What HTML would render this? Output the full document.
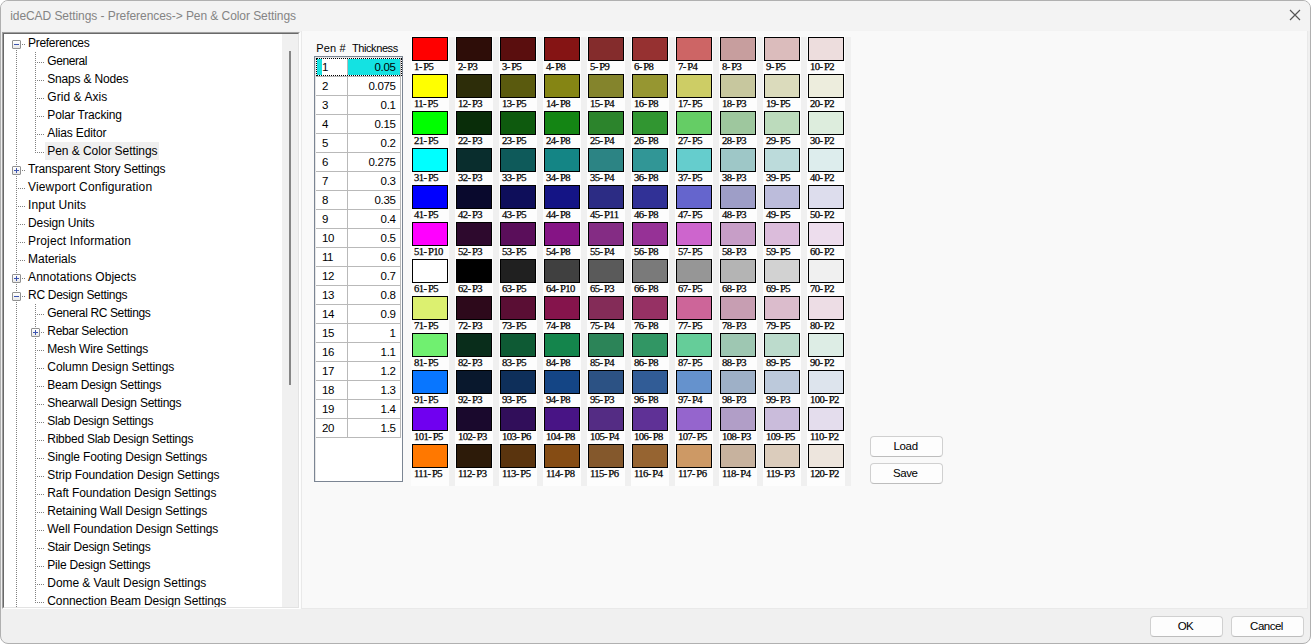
<!DOCTYPE html>
<html><head><meta charset="utf-8"><title>ideCAD Settings</title>
<style>
html,body{margin:0;padding:0;background:#fff;}
body{width:1311px;height:644px;overflow:hidden;position:relative;font-family:"Liberation Sans",sans-serif;font-size:12px;}
#win{position:absolute;left:0;top:0;width:1309px;height:642px;border:1px solid #b0b0b0;border-radius:8px;background:#f0f0f0;overflow:hidden;}
#win > *{position:absolute;}
/* coordinates inside #win are page coords minus 1 (border) -> use wrapper shift */
#titlebar{left:-1px;top:-1px;width:1311px;height:31px;background:#f3f3f3;}
#closex{left:1288px;top:8px;}
#tree{left:1px;top:31px;width:296px;height:575px;background:#fff;border:1px solid;border-color:#a0a0a0 #fff #fff #a0a0a0;box-sizing:content-box;}
#sbar{position:absolute;left:279px;top:1px;width:16px;height:573px;background:#f0f0f0;}
#thumb{position:absolute;left:286px;top:18px;width:2px;height:334px;background:#868686;}
#panel{left:300px;top:30px;width:1007px;height:578px;background:#f9f9f9;border:1px solid #e9e9e9;border-top:none;box-sizing:border-box;}
.t{position:absolute;white-space:pre;line-height:normal;margin-left:-1px;margin-top:-1px;}
.dh{position:absolute;height:1px;margin-left:-1px;margin-top:-1px;background-image:repeating-linear-gradient(90deg,#808080 0 1px,transparent 1px 2px);}
.dv{position:absolute;width:1px;margin-left:-1px;margin-top:-1px;background-image:repeating-linear-gradient(180deg,#808080 0 1px,transparent 1px 2px);}
.bx{position:absolute;width:7px;height:7px;border:1px solid #919191;border-radius:1px;background:linear-gradient(#fff,#e8e8e8);margin-left:-1px;margin-top:-1px;}
.bx .mh{position:absolute;left:1px;top:3px;width:5px;height:1px;background:#3c54b0;}
.bx .mv{position:absolute;left:3px;top:1px;width:1px;height:5px;background:#3c54b0;}
.abs{position:absolute;margin-left:-1px;margin-top:-1px;}
.btn{position:absolute;margin-left:-1px;margin-top:-1px;box-sizing:border-box;background:#fdfdfd;border:1px solid #d0d0d0;border-bottom-color:#bdbdbd;border-radius:4px;}
.sw{position:absolute;margin-left:-1px;margin-top:-1px;width:34px;height:22px;border:1px solid #000;}

#treein{position:absolute;left:0;top:0;width:296px;height:575px;border:1px solid;border-color:#696969 #e3e3e3 #e3e3e3 #696969;box-sizing:border-box;}

.lb{-webkit-text-stroke:0.25px #000;}
.lb b{font-weight:normal;margin-left:1.6px;}

</style></head>
<body>
<div id="win">
<div id="titlebar"></div>
<svg id="closex" width="12" height="12" viewBox="0 0 12 12"><path d="M1 1 L11 11 M11 1 L1 11" stroke="#555" stroke-width="1.15" fill="none"/></svg>
<div id="tree"><div id="treein"></div><div id="sbar"></div><div id="thumb"></div></div>
<div id="panel"></div>
<div class="dv" style="left:16px;top:50px;height:557px"></div>
<div class="dv" style="left:35px;top:52px;height:101px"></div>
<div class="dv" style="left:35px;top:304px;height:299px"></div>
<div class="bx" style="left:12px;top:40px"><i class="mh"></i></div>
<div class="dh" style="left:22px;top:44px;width:3px"></div>
<div class="dh" style="left:37px;top:62px;width:7px"></div>
<div class="dh" style="left:37px;top:80px;width:7px"></div>
<div class="dh" style="left:37px;top:98px;width:7px"></div>
<div class="dh" style="left:37px;top:116px;width:7px"></div>
<div class="dh" style="left:37px;top:134px;width:7px"></div>
<div class="dh" style="left:37px;top:152px;width:7px"></div>
<div class="abs" style="left:45px;top:142px;width:114px;height:18px;background:#efefef"></div>
<div class="bx" style="left:12px;top:166px"><i class="mh"></i><i class="mv"></i></div>
<div class="dh" style="left:22px;top:170px;width:3px"></div>
<div class="dh" style="left:18px;top:188px;width:7px"></div>
<div class="dh" style="left:18px;top:206px;width:7px"></div>
<div class="dh" style="left:18px;top:224px;width:7px"></div>
<div class="dh" style="left:18px;top:242px;width:7px"></div>
<div class="dh" style="left:18px;top:260px;width:7px"></div>
<div class="bx" style="left:12px;top:274px"><i class="mh"></i><i class="mv"></i></div>
<div class="dh" style="left:22px;top:278px;width:3px"></div>
<div class="bx" style="left:12px;top:292px"><i class="mh"></i></div>
<div class="dh" style="left:22px;top:296px;width:3px"></div>
<div class="dh" style="left:37px;top:314px;width:7px"></div>
<div class="bx" style="left:31px;top:328px"><i class="mh"></i><i class="mv"></i></div>
<div class="dh" style="left:41px;top:332px;width:3px"></div>
<div class="dh" style="left:37px;top:350px;width:7px"></div>
<div class="dh" style="left:37px;top:368px;width:7px"></div>
<div class="dh" style="left:37px;top:386px;width:7px"></div>
<div class="dh" style="left:37px;top:404px;width:7px"></div>
<div class="dh" style="left:37px;top:422px;width:7px"></div>
<div class="dh" style="left:37px;top:440px;width:7px"></div>
<div class="dh" style="left:37px;top:458px;width:7px"></div>
<div class="dh" style="left:37px;top:476px;width:7px"></div>
<div class="dh" style="left:37px;top:494px;width:7px"></div>
<div class="dh" style="left:37px;top:512px;width:7px"></div>
<div class="dh" style="left:37px;top:530px;width:7px"></div>
<div class="dh" style="left:37px;top:548px;width:7px"></div>
<div class="dh" style="left:37px;top:566px;width:7px"></div>
<div class="dh" style="left:37px;top:584px;width:7px"></div>
<div class="dh" style="left:37px;top:602px;width:7px"></div>
<div class="abs" style="left:314px;top:56px;width:87px;height:424px;border:1px solid #7b8593;background:#fff"></div>
<div class="abs" style="left:315px;top:57px;width:87px;height:424px;border-left:1px solid #e6e6e6;border-top:1px solid #e6e6e6;box-sizing:border-box"></div>
<div class="abs" style="left:317px;top:59px;width:5px;height:16px;background:#14e2e2"></div>
<div class="abs" style="left:348px;top:59px;width:53px;height:16px;background:#14e2e2"></div>
<div class="abs" style="left:316px;top:76px;width:85px;height:1px;background:#b9b9b9"></div>
<div class="abs" style="left:316px;top:95px;width:85px;height:1px;background:#b9b9b9"></div>
<div class="abs" style="left:316px;top:114px;width:85px;height:1px;background:#b9b9b9"></div>
<div class="abs" style="left:316px;top:133px;width:85px;height:1px;background:#b9b9b9"></div>
<div class="abs" style="left:316px;top:152px;width:85px;height:1px;background:#b9b9b9"></div>
<div class="abs" style="left:316px;top:171px;width:85px;height:1px;background:#b9b9b9"></div>
<div class="abs" style="left:316px;top:190px;width:85px;height:1px;background:#b9b9b9"></div>
<div class="abs" style="left:316px;top:209px;width:85px;height:1px;background:#b9b9b9"></div>
<div class="abs" style="left:316px;top:228px;width:85px;height:1px;background:#b9b9b9"></div>
<div class="abs" style="left:316px;top:247px;width:85px;height:1px;background:#b9b9b9"></div>
<div class="abs" style="left:316px;top:266px;width:85px;height:1px;background:#b9b9b9"></div>
<div class="abs" style="left:316px;top:285px;width:85px;height:1px;background:#b9b9b9"></div>
<div class="abs" style="left:316px;top:304px;width:85px;height:1px;background:#b9b9b9"></div>
<div class="abs" style="left:316px;top:323px;width:85px;height:1px;background:#b9b9b9"></div>
<div class="abs" style="left:316px;top:342px;width:85px;height:1px;background:#b9b9b9"></div>
<div class="abs" style="left:316px;top:361px;width:85px;height:1px;background:#b9b9b9"></div>
<div class="abs" style="left:316px;top:380px;width:85px;height:1px;background:#b9b9b9"></div>
<div class="abs" style="left:316px;top:399px;width:85px;height:1px;background:#b9b9b9"></div>
<div class="abs" style="left:316px;top:418px;width:85px;height:1px;background:#b9b9b9"></div>
<div class="abs" style="left:316px;top:437px;width:85px;height:1px;background:#b9b9b9"></div>
<div class="abs" style="left:347px;top:58px;width:1px;height:380px;background:#b9b9b9"></div>
<div class="abs" style="left:400px;top:58px;width:1px;height:380px;background:#b9b9b9"></div>
<div class="abs" style="left:316px;top:58px;width:86px;height:18px;box-sizing:border-box;border:1px dotted #000"></div>
<div class="abs" style="left:411px;top:36px;width:38px;height:450px;background:#fdfdfd"></div>
<div class="abs" style="left:449px;top:37px;width:6px;height:449px;background:#f0f0f0"></div>
<div class="abs" style="left:455px;top:36px;width:38px;height:450px;background:#fdfdfd"></div>
<div class="abs" style="left:493px;top:37px;width:6px;height:449px;background:#f0f0f0"></div>
<div class="abs" style="left:499px;top:36px;width:38px;height:450px;background:#fdfdfd"></div>
<div class="abs" style="left:537px;top:37px;width:6px;height:449px;background:#f0f0f0"></div>
<div class="abs" style="left:543px;top:36px;width:38px;height:450px;background:#fdfdfd"></div>
<div class="abs" style="left:581px;top:37px;width:6px;height:449px;background:#f0f0f0"></div>
<div class="abs" style="left:587px;top:36px;width:38px;height:450px;background:#fdfdfd"></div>
<div class="abs" style="left:625px;top:37px;width:6px;height:449px;background:#f0f0f0"></div>
<div class="abs" style="left:631px;top:36px;width:38px;height:450px;background:#fdfdfd"></div>
<div class="abs" style="left:669px;top:37px;width:6px;height:449px;background:#f0f0f0"></div>
<div class="abs" style="left:675px;top:36px;width:38px;height:450px;background:#fdfdfd"></div>
<div class="abs" style="left:713px;top:37px;width:6px;height:449px;background:#f0f0f0"></div>
<div class="abs" style="left:719px;top:36px;width:38px;height:450px;background:#fdfdfd"></div>
<div class="abs" style="left:757px;top:37px;width:6px;height:449px;background:#f0f0f0"></div>
<div class="abs" style="left:763px;top:36px;width:38px;height:450px;background:#fdfdfd"></div>
<div class="abs" style="left:801px;top:37px;width:6px;height:449px;background:#f0f0f0"></div>
<div class="abs" style="left:807px;top:36px;width:38px;height:450px;background:#fdfdfd"></div>
<div class="abs" style="left:845px;top:37px;width:6px;height:449px;background:#f0f0f0"></div>
<div class="sw" style="left:412px;top:37px;background:#ff0000"></div>
<div class="sw" style="left:456px;top:37px;background:#2e0d08"></div>
<div class="sw" style="left:500px;top:37px;background:#5a0e0e"></div>
<div class="sw" style="left:544px;top:37px;background:#851414"></div>
<div class="sw" style="left:588px;top:37px;background:#842c2c"></div>
<div class="sw" style="left:632px;top:37px;background:#963131"></div>
<div class="sw" style="left:676px;top:37px;background:#cd6565"></div>
<div class="sw" style="left:720px;top:37px;background:#c79e9e"></div>
<div class="sw" style="left:764px;top:37px;background:#dbbcbc"></div>
<div class="sw" style="left:808px;top:37px;background:#eddddd"></div>
<div class="sw" style="left:412px;top:74px;background:#ffff00"></div>
<div class="sw" style="left:456px;top:74px;background:#2d2d09"></div>
<div class="sw" style="left:500px;top:74px;background:#5a5a0e"></div>
<div class="sw" style="left:544px;top:74px;background:#858514"></div>
<div class="sw" style="left:588px;top:74px;background:#84842c"></div>
<div class="sw" style="left:632px;top:74px;background:#969631"></div>
<div class="sw" style="left:676px;top:74px;background:#cdcd65"></div>
<div class="sw" style="left:720px;top:74px;background:#c7c79e"></div>
<div class="sw" style="left:764px;top:74px;background:#dbdbbc"></div>
<div class="sw" style="left:808px;top:74px;background:#ededdd"></div>
<div class="sw" style="left:412px;top:111px;background:#00ff00"></div>
<div class="sw" style="left:456px;top:111px;background:#092d09"></div>
<div class="sw" style="left:500px;top:111px;background:#0e5a0e"></div>
<div class="sw" style="left:544px;top:111px;background:#148514"></div>
<div class="sw" style="left:588px;top:111px;background:#2c842c"></div>
<div class="sw" style="left:632px;top:111px;background:#319631"></div>
<div class="sw" style="left:676px;top:111px;background:#65cd65"></div>
<div class="sw" style="left:720px;top:111px;background:#9ec79e"></div>
<div class="sw" style="left:764px;top:111px;background:#bcdbbc"></div>
<div class="sw" style="left:808px;top:111px;background:#ddeddd"></div>
<div class="sw" style="left:412px;top:148px;background:#00ffff"></div>
<div class="sw" style="left:456px;top:148px;background:#092d2d"></div>
<div class="sw" style="left:500px;top:148px;background:#0e5a5a"></div>
<div class="sw" style="left:544px;top:148px;background:#148585"></div>
<div class="sw" style="left:588px;top:148px;background:#2c8484"></div>
<div class="sw" style="left:632px;top:148px;background:#319696"></div>
<div class="sw" style="left:676px;top:148px;background:#65cdcd"></div>
<div class="sw" style="left:720px;top:148px;background:#9ec7c7"></div>
<div class="sw" style="left:764px;top:148px;background:#bcdbdb"></div>
<div class="sw" style="left:808px;top:148px;background:#ddeded"></div>
<div class="sw" style="left:412px;top:185px;background:#0000ff"></div>
<div class="sw" style="left:456px;top:185px;background:#09092d"></div>
<div class="sw" style="left:500px;top:185px;background:#0e0e5a"></div>
<div class="sw" style="left:544px;top:185px;background:#141485"></div>
<div class="sw" style="left:588px;top:185px;background:#2c2c84"></div>
<div class="sw" style="left:632px;top:185px;background:#313196"></div>
<div class="sw" style="left:676px;top:185px;background:#6565cd"></div>
<div class="sw" style="left:720px;top:185px;background:#9e9ec7"></div>
<div class="sw" style="left:764px;top:185px;background:#bcbcdb"></div>
<div class="sw" style="left:808px;top:185px;background:#dddded"></div>
<div class="sw" style="left:412px;top:222px;background:#ff00ff"></div>
<div class="sw" style="left:456px;top:222px;background:#2d092d"></div>
<div class="sw" style="left:500px;top:222px;background:#5a0e5a"></div>
<div class="sw" style="left:544px;top:222px;background:#851485"></div>
<div class="sw" style="left:588px;top:222px;background:#842c84"></div>
<div class="sw" style="left:632px;top:222px;background:#963196"></div>
<div class="sw" style="left:676px;top:222px;background:#cd65cd"></div>
<div class="sw" style="left:720px;top:222px;background:#c79ec7"></div>
<div class="sw" style="left:764px;top:222px;background:#dbbcdb"></div>
<div class="sw" style="left:808px;top:222px;background:#eddded"></div>
<div class="sw" style="left:412px;top:259px;background:#ffffff"></div>
<div class="sw" style="left:456px;top:259px;background:#000000"></div>
<div class="sw" style="left:500px;top:259px;background:#202020"></div>
<div class="sw" style="left:544px;top:259px;background:#404040"></div>
<div class="sw" style="left:588px;top:259px;background:#5a5a5a"></div>
<div class="sw" style="left:632px;top:259px;background:#7a7a7a"></div>
<div class="sw" style="left:676px;top:259px;background:#969696"></div>
<div class="sw" style="left:720px;top:259px;background:#b4b4b4"></div>
<div class="sw" style="left:764px;top:259px;background:#d2d2d2"></div>
<div class="sw" style="left:808px;top:259px;background:#f0f0f0"></div>
<div class="sw" style="left:412px;top:296px;background:#dcf070"></div>
<div class="sw" style="left:456px;top:296px;background:#2d091b"></div>
<div class="sw" style="left:500px;top:296px;background:#5a0e34"></div>
<div class="sw" style="left:544px;top:296px;background:#85144c"></div>
<div class="sw" style="left:588px;top:296px;background:#842c58"></div>
<div class="sw" style="left:632px;top:296px;background:#963164"></div>
<div class="sw" style="left:676px;top:296px;background:#cd6599"></div>
<div class="sw" style="left:720px;top:296px;background:#c79eb2"></div>
<div class="sw" style="left:764px;top:296px;background:#dbbccc"></div>
<div class="sw" style="left:808px;top:296px;background:#eddde5"></div>
<div class="sw" style="left:412px;top:333px;background:#70f070"></div>
<div class="sw" style="left:456px;top:333px;background:#092d1b"></div>
<div class="sw" style="left:500px;top:333px;background:#0e5a34"></div>
<div class="sw" style="left:544px;top:333px;background:#14854c"></div>
<div class="sw" style="left:588px;top:333px;background:#2c8458"></div>
<div class="sw" style="left:632px;top:333px;background:#319664"></div>
<div class="sw" style="left:676px;top:333px;background:#65cd99"></div>
<div class="sw" style="left:720px;top:333px;background:#9ec7b2"></div>
<div class="sw" style="left:764px;top:333px;background:#bcdbcc"></div>
<div class="sw" style="left:808px;top:333px;background:#ddede5"></div>
<div class="sw" style="left:412px;top:370px;background:#0876ff"></div>
<div class="sw" style="left:456px;top:370px;background:#09182d"></div>
<div class="sw" style="left:500px;top:370px;background:#0e2f5a"></div>
<div class="sw" style="left:544px;top:370px;background:#144585"></div>
<div class="sw" style="left:588px;top:370px;background:#2c5284"></div>
<div class="sw" style="left:632px;top:370px;background:#315c96"></div>
<div class="sw" style="left:676px;top:370px;background:#6592cd"></div>
<div class="sw" style="left:720px;top:370px;background:#9eb0c7"></div>
<div class="sw" style="left:764px;top:370px;background:#bcc9db"></div>
<div class="sw" style="left:808px;top:370px;background:#dde4ed"></div>
<div class="sw" style="left:412px;top:407px;background:#7000f0"></div>
<div class="sw" style="left:456px;top:407px;background:#1a092d"></div>
<div class="sw" style="left:500px;top:407px;background:#310e5a"></div>
<div class="sw" style="left:544px;top:407px;background:#481485"></div>
<div class="sw" style="left:588px;top:407px;background:#542c84"></div>
<div class="sw" style="left:632px;top:407px;background:#5f3196"></div>
<div class="sw" style="left:676px;top:407px;background:#9565cd"></div>
<div class="sw" style="left:720px;top:407px;background:#b19ec7"></div>
<div class="sw" style="left:764px;top:407px;background:#cabcdb"></div>
<div class="sw" style="left:808px;top:407px;background:#e4dded"></div>
<div class="sw" style="left:412px;top:444px;background:#ff7800"></div>
<div class="sw" style="left:456px;top:444px;background:#2d1b09"></div>
<div class="sw" style="left:500px;top:444px;background:#5a340e"></div>
<div class="sw" style="left:544px;top:444px;background:#854c14"></div>
<div class="sw" style="left:588px;top:444px;background:#84582c"></div>
<div class="sw" style="left:632px;top:444px;background:#966431"></div>
<div class="sw" style="left:676px;top:444px;background:#cd9965"></div>
<div class="sw" style="left:720px;top:444px;background:#c7b29e"></div>
<div class="sw" style="left:764px;top:444px;background:#dbccbc"></div>
<div class="sw" style="left:808px;top:444px;background:#ede5dd"></div>
<div class="btn" style="left:870px;top:436px;width:73px;height:21px"></div>
<div class="btn" style="left:870px;top:463px;width:73px;height:21px"></div>
<div class="btn" style="left:1150px;top:616px;width:73px;height:21px"></div>
<div class="btn" style="left:1231px;top:616px;width:73px;height:21px"></div>
<div class="abs" style="left:300px;top:32px;width:1px;height:577px;background:#fcfcfc"></div>
<span class="t tr" style="left:28.10px;top:35.84px;font-size:12px;letter-spacing:-0.309px;color:#000;font-family:'Liberation Sans',sans-serif">Preferences</span>
<span class="t tr" style="left:47.30px;top:53.84px;font-size:12px;letter-spacing:-0.429px;color:#000;font-family:'Liberation Sans',sans-serif">General</span>
<span class="t tr" style="left:47.30px;top:71.84px;font-size:12px;letter-spacing:-0.192px;color:#000;font-family:'Liberation Sans',sans-serif">Snaps &amp; Nodes</span>
<span class="t tr" style="left:47.30px;top:89.84px;font-size:12px;letter-spacing:0.058px;color:#000;font-family:'Liberation Sans',sans-serif">Grid &amp; Axis</span>
<span class="t tr" style="left:47.30px;top:107.84px;font-size:12px;letter-spacing:-0.157px;color:#000;font-family:'Liberation Sans',sans-serif">Polar Tracking</span>
<span class="t tr" style="left:47.30px;top:125.84px;font-size:12px;letter-spacing:-0.134px;color:#000;font-family:'Liberation Sans',sans-serif">Alias Editor</span>
<span class="t tr" style="left:47.30px;top:143.84px;font-size:12px;letter-spacing:-0.060px;color:#000;font-family:'Liberation Sans',sans-serif">Pen &amp; Color Settings</span>
<span class="t tr" style="left:28.10px;top:161.84px;font-size:12px;letter-spacing:-0.192px;color:#000;font-family:'Liberation Sans',sans-serif">Transparent Story Settings</span>
<span class="t tr" style="left:28.10px;top:179.84px;font-size:12px;letter-spacing:0.132px;color:#000;font-family:'Liberation Sans',sans-serif">Viewport Configuration</span>
<span class="t tr" style="left:28.10px;top:197.84px;font-size:12px;letter-spacing:0.066px;color:#000;font-family:'Liberation Sans',sans-serif">Input Units</span>
<span class="t tr" style="left:28.10px;top:215.84px;font-size:12px;letter-spacing:-0.153px;color:#000;font-family:'Liberation Sans',sans-serif">Design Units</span>
<span class="t tr" style="left:28.10px;top:233.84px;font-size:12px;letter-spacing:0.115px;color:#000;font-family:'Liberation Sans',sans-serif">Project Information</span>
<span class="t tr" style="left:28.10px;top:251.84px;font-size:12px;letter-spacing:-0.065px;color:#000;font-family:'Liberation Sans',sans-serif">Materials</span>
<span class="t tr" style="left:28.10px;top:269.84px;font-size:12px;letter-spacing:0.042px;color:#000;font-family:'Liberation Sans',sans-serif">Annotations Objects</span>
<span class="t tr" style="left:28.10px;top:287.84px;font-size:12px;letter-spacing:-0.307px;color:#000;font-family:'Liberation Sans',sans-serif">RC Design Settings</span>
<span class="t tr" style="left:47.30px;top:305.84px;font-size:12px;letter-spacing:-0.366px;color:#000;font-family:'Liberation Sans',sans-serif">General RC Settings</span>
<span class="t tr" style="left:47.30px;top:323.84px;font-size:12px;letter-spacing:-0.326px;color:#000;font-family:'Liberation Sans',sans-serif">Rebar Selection</span>
<span class="t tr" style="left:47.30px;top:341.84px;font-size:12px;letter-spacing:-0.175px;color:#000;font-family:'Liberation Sans',sans-serif">Mesh Wire Settings</span>
<span class="t tr" style="left:47.30px;top:359.84px;font-size:12px;letter-spacing:-0.083px;color:#000;font-family:'Liberation Sans',sans-serif">Column Design Settings</span>
<span class="t tr" style="left:47.30px;top:377.84px;font-size:12px;letter-spacing:-0.242px;color:#000;font-family:'Liberation Sans',sans-serif">Beam Design Settings</span>
<span class="t tr" style="left:47.30px;top:395.84px;font-size:12px;letter-spacing:-0.243px;color:#000;font-family:'Liberation Sans',sans-serif">Shearwall Design Settings</span>
<span class="t tr" style="left:47.30px;top:413.84px;font-size:12px;letter-spacing:-0.280px;color:#000;font-family:'Liberation Sans',sans-serif">Slab Design Settings</span>
<span class="t tr" style="left:47.30px;top:431.84px;font-size:12px;letter-spacing:-0.254px;color:#000;font-family:'Liberation Sans',sans-serif">Ribbed Slab Design Settings</span>
<span class="t tr" style="left:47.30px;top:449.84px;font-size:12px;letter-spacing:-0.140px;color:#000;font-family:'Liberation Sans',sans-serif">Single Footing Design Settings</span>
<span class="t tr" style="left:47.30px;top:467.84px;font-size:12px;letter-spacing:-0.104px;color:#000;font-family:'Liberation Sans',sans-serif">Strip Foundation Design Settings</span>
<span class="t tr" style="left:47.30px;top:485.84px;font-size:12px;letter-spacing:-0.122px;color:#000;font-family:'Liberation Sans',sans-serif">Raft Foundation Design Settings</span>
<span class="t tr" style="left:47.30px;top:503.84px;font-size:12px;letter-spacing:-0.147px;color:#000;font-family:'Liberation Sans',sans-serif">Retaining Wall Design Settings</span>
<span class="t tr" style="left:47.30px;top:521.84px;font-size:12px;letter-spacing:-0.096px;color:#000;font-family:'Liberation Sans',sans-serif">Well Foundation Design Settings</span>
<span class="t tr" style="left:47.30px;top:539.84px;font-size:12px;letter-spacing:-0.282px;color:#000;font-family:'Liberation Sans',sans-serif">Stair Design Setings</span>
<span class="t tr" style="left:47.30px;top:557.84px;font-size:12px;letter-spacing:-0.215px;color:#000;font-family:'Liberation Sans',sans-serif">Pile Design Settings</span>
<span class="t tr" style="left:47.30px;top:575.84px;font-size:12px;letter-spacing:-0.055px;color:#000;font-family:'Liberation Sans',sans-serif">Dome &amp; Vault Design Settings</span>
<span class="t tr" style="left:47.30px;top:593.84px;font-size:12px;letter-spacing:-0.125px;color:#000;font-family:'Liberation Sans',sans-serif">Connection Beam Design Settings</span>
<span class="t " style="left:10.20px;top:8.94px;font-size:12px;letter-spacing:-0.064px;color:#848484;font-family:'Liberation Sans',sans-serif">ideCAD Settings - Preferences-> Pen &amp; Color Settings</span>
<span class="t " style="left:316.20px;top:41.95px;font-size:11px;letter-spacing:0.170px;color:#000;font-family:'Liberation Sans',sans-serif">Pen #</span>
<span class="t " style="left:352.00px;top:41.95px;font-size:11px;letter-spacing:-0.415px;color:#000;font-family:'Liberation Sans',sans-serif">Thickness</span>
<span class="t " style="left:321.90px;top:61.19px;font-size:11.5px;letter-spacing:-0.350px;color:#000;font-family:'Liberation Sans',sans-serif">1</span>
<span class="t ra" style="left:374.56px;top:61.19px;font-size:11.5px;letter-spacing:-0.350px;color:#000;font-family:'Liberation Sans',sans-serif">0.05</span>
<span class="t " style="left:321.90px;top:80.19px;font-size:11.5px;letter-spacing:-0.350px;color:#000;font-family:'Liberation Sans',sans-serif">2</span>
<span class="t ra" style="left:368.52px;top:80.19px;font-size:11.5px;letter-spacing:-0.350px;color:#000;font-family:'Liberation Sans',sans-serif">0.075</span>
<span class="t " style="left:321.90px;top:99.19px;font-size:11.5px;letter-spacing:-0.350px;color:#000;font-family:'Liberation Sans',sans-serif">3</span>
<span class="t ra" style="left:380.60px;top:99.19px;font-size:11.5px;letter-spacing:-0.350px;color:#000;font-family:'Liberation Sans',sans-serif">0.1</span>
<span class="t " style="left:321.90px;top:118.19px;font-size:11.5px;letter-spacing:-0.350px;color:#000;font-family:'Liberation Sans',sans-serif">4</span>
<span class="t ra" style="left:374.56px;top:118.19px;font-size:11.5px;letter-spacing:-0.350px;color:#000;font-family:'Liberation Sans',sans-serif">0.15</span>
<span class="t " style="left:321.90px;top:137.19px;font-size:11.5px;letter-spacing:-0.350px;color:#000;font-family:'Liberation Sans',sans-serif">5</span>
<span class="t ra" style="left:380.60px;top:137.19px;font-size:11.5px;letter-spacing:-0.350px;color:#000;font-family:'Liberation Sans',sans-serif">0.2</span>
<span class="t " style="left:321.90px;top:156.19px;font-size:11.5px;letter-spacing:-0.350px;color:#000;font-family:'Liberation Sans',sans-serif">6</span>
<span class="t ra" style="left:368.52px;top:156.19px;font-size:11.5px;letter-spacing:-0.350px;color:#000;font-family:'Liberation Sans',sans-serif">0.275</span>
<span class="t " style="left:321.90px;top:175.19px;font-size:11.5px;letter-spacing:-0.350px;color:#000;font-family:'Liberation Sans',sans-serif">7</span>
<span class="t ra" style="left:380.60px;top:175.19px;font-size:11.5px;letter-spacing:-0.350px;color:#000;font-family:'Liberation Sans',sans-serif">0.3</span>
<span class="t " style="left:321.90px;top:194.19px;font-size:11.5px;letter-spacing:-0.350px;color:#000;font-family:'Liberation Sans',sans-serif">8</span>
<span class="t ra" style="left:374.56px;top:194.19px;font-size:11.5px;letter-spacing:-0.350px;color:#000;font-family:'Liberation Sans',sans-serif">0.35</span>
<span class="t " style="left:321.90px;top:213.19px;font-size:11.5px;letter-spacing:-0.350px;color:#000;font-family:'Liberation Sans',sans-serif">9</span>
<span class="t ra" style="left:380.60px;top:213.19px;font-size:11.5px;letter-spacing:-0.350px;color:#000;font-family:'Liberation Sans',sans-serif">0.4</span>
<span class="t " style="left:321.90px;top:232.19px;font-size:11.5px;letter-spacing:-0.350px;color:#000;font-family:'Liberation Sans',sans-serif">10</span>
<span class="t ra" style="left:380.60px;top:232.19px;font-size:11.5px;letter-spacing:-0.350px;color:#000;font-family:'Liberation Sans',sans-serif">0.5</span>
<span class="t " style="left:321.90px;top:251.19px;font-size:11.5px;letter-spacing:-0.350px;color:#000;font-family:'Liberation Sans',sans-serif">11</span>
<span class="t ra" style="left:380.60px;top:251.19px;font-size:11.5px;letter-spacing:-0.350px;color:#000;font-family:'Liberation Sans',sans-serif">0.6</span>
<span class="t " style="left:321.90px;top:270.19px;font-size:11.5px;letter-spacing:-0.350px;color:#000;font-family:'Liberation Sans',sans-serif">12</span>
<span class="t ra" style="left:380.60px;top:270.19px;font-size:11.5px;letter-spacing:-0.350px;color:#000;font-family:'Liberation Sans',sans-serif">0.7</span>
<span class="t " style="left:321.90px;top:289.19px;font-size:11.5px;letter-spacing:-0.350px;color:#000;font-family:'Liberation Sans',sans-serif">13</span>
<span class="t ra" style="left:380.60px;top:289.19px;font-size:11.5px;letter-spacing:-0.350px;color:#000;font-family:'Liberation Sans',sans-serif">0.8</span>
<span class="t " style="left:321.90px;top:308.19px;font-size:11.5px;letter-spacing:-0.350px;color:#000;font-family:'Liberation Sans',sans-serif">14</span>
<span class="t ra" style="left:380.60px;top:308.19px;font-size:11.5px;letter-spacing:-0.350px;color:#000;font-family:'Liberation Sans',sans-serif">0.9</span>
<span class="t " style="left:321.90px;top:327.19px;font-size:11.5px;letter-spacing:-0.350px;color:#000;font-family:'Liberation Sans',sans-serif">15</span>
<span class="t ra" style="left:389.49px;top:327.19px;font-size:11.5px;letter-spacing:-0.350px;color:#000;font-family:'Liberation Sans',sans-serif">1</span>
<span class="t " style="left:321.90px;top:346.19px;font-size:11.5px;letter-spacing:-0.350px;color:#000;font-family:'Liberation Sans',sans-serif">16</span>
<span class="t ra" style="left:380.60px;top:346.19px;font-size:11.5px;letter-spacing:-0.350px;color:#000;font-family:'Liberation Sans',sans-serif">1.1</span>
<span class="t " style="left:321.90px;top:365.19px;font-size:11.5px;letter-spacing:-0.350px;color:#000;font-family:'Liberation Sans',sans-serif">17</span>
<span class="t ra" style="left:380.60px;top:365.19px;font-size:11.5px;letter-spacing:-0.350px;color:#000;font-family:'Liberation Sans',sans-serif">1.2</span>
<span class="t " style="left:321.90px;top:384.19px;font-size:11.5px;letter-spacing:-0.350px;color:#000;font-family:'Liberation Sans',sans-serif">18</span>
<span class="t ra" style="left:380.60px;top:384.19px;font-size:11.5px;letter-spacing:-0.350px;color:#000;font-family:'Liberation Sans',sans-serif">1.3</span>
<span class="t " style="left:321.90px;top:403.19px;font-size:11.5px;letter-spacing:-0.350px;color:#000;font-family:'Liberation Sans',sans-serif">19</span>
<span class="t ra" style="left:380.60px;top:403.19px;font-size:11.5px;letter-spacing:-0.350px;color:#000;font-family:'Liberation Sans',sans-serif">1.4</span>
<span class="t " style="left:321.90px;top:422.19px;font-size:11.5px;letter-spacing:-0.350px;color:#000;font-family:'Liberation Sans',sans-serif">20</span>
<span class="t ra" style="left:380.60px;top:422.19px;font-size:11.5px;letter-spacing:-0.350px;color:#000;font-family:'Liberation Sans',sans-serif">1.5</span>
<span class="t lb" style="left:414.00px;top:60.29px;font-size:10.67px;letter-spacing:-0.600px;color:#000;font-family:'Liberation Serif',serif">1-<b>P5</b></span>
<span class="t lb" style="left:458.00px;top:60.29px;font-size:10.67px;letter-spacing:-0.600px;color:#000;font-family:'Liberation Serif',serif">2-<b>P3</b></span>
<span class="t lb" style="left:502.00px;top:60.29px;font-size:10.67px;letter-spacing:-0.600px;color:#000;font-family:'Liberation Serif',serif">3-<b>P5</b></span>
<span class="t lb" style="left:546.00px;top:60.29px;font-size:10.67px;letter-spacing:-0.600px;color:#000;font-family:'Liberation Serif',serif">4-<b>P8</b></span>
<span class="t lb" style="left:590.00px;top:60.29px;font-size:10.67px;letter-spacing:-0.600px;color:#000;font-family:'Liberation Serif',serif">5-<b>P9</b></span>
<span class="t lb" style="left:634.00px;top:60.29px;font-size:10.67px;letter-spacing:-0.600px;color:#000;font-family:'Liberation Serif',serif">6-<b>P8</b></span>
<span class="t lb" style="left:678.00px;top:60.29px;font-size:10.67px;letter-spacing:-0.600px;color:#000;font-family:'Liberation Serif',serif">7-<b>P4</b></span>
<span class="t lb" style="left:722.00px;top:60.29px;font-size:10.67px;letter-spacing:-0.600px;color:#000;font-family:'Liberation Serif',serif">8-<b>P3</b></span>
<span class="t lb" style="left:766.00px;top:60.29px;font-size:10.67px;letter-spacing:-0.600px;color:#000;font-family:'Liberation Serif',serif">9-<b>P5</b></span>
<span class="t lb" style="left:810.00px;top:60.29px;font-size:10.67px;letter-spacing:-0.600px;color:#000;font-family:'Liberation Serif',serif">10-<b>P2</b></span>
<span class="t lb" style="left:414.00px;top:97.29px;font-size:10.67px;letter-spacing:-0.600px;color:#000;font-family:'Liberation Serif',serif">11-<b>P5</b></span>
<span class="t lb" style="left:458.00px;top:97.29px;font-size:10.67px;letter-spacing:-0.600px;color:#000;font-family:'Liberation Serif',serif">12-<b>P3</b></span>
<span class="t lb" style="left:502.00px;top:97.29px;font-size:10.67px;letter-spacing:-0.600px;color:#000;font-family:'Liberation Serif',serif">13-<b>P5</b></span>
<span class="t lb" style="left:546.00px;top:97.29px;font-size:10.67px;letter-spacing:-0.600px;color:#000;font-family:'Liberation Serif',serif">14-<b>P8</b></span>
<span class="t lb" style="left:590.00px;top:97.29px;font-size:10.67px;letter-spacing:-0.600px;color:#000;font-family:'Liberation Serif',serif">15-<b>P4</b></span>
<span class="t lb" style="left:634.00px;top:97.29px;font-size:10.67px;letter-spacing:-0.600px;color:#000;font-family:'Liberation Serif',serif">16-<b>P8</b></span>
<span class="t lb" style="left:678.00px;top:97.29px;font-size:10.67px;letter-spacing:-0.600px;color:#000;font-family:'Liberation Serif',serif">17-<b>P5</b></span>
<span class="t lb" style="left:722.00px;top:97.29px;font-size:10.67px;letter-spacing:-0.600px;color:#000;font-family:'Liberation Serif',serif">18-<b>P3</b></span>
<span class="t lb" style="left:766.00px;top:97.29px;font-size:10.67px;letter-spacing:-0.600px;color:#000;font-family:'Liberation Serif',serif">19-<b>P5</b></span>
<span class="t lb" style="left:810.00px;top:97.29px;font-size:10.67px;letter-spacing:-0.600px;color:#000;font-family:'Liberation Serif',serif">20-<b>P2</b></span>
<span class="t lb" style="left:414.00px;top:134.29px;font-size:10.67px;letter-spacing:-0.600px;color:#000;font-family:'Liberation Serif',serif">21-<b>P5</b></span>
<span class="t lb" style="left:458.00px;top:134.29px;font-size:10.67px;letter-spacing:-0.600px;color:#000;font-family:'Liberation Serif',serif">22-<b>P3</b></span>
<span class="t lb" style="left:502.00px;top:134.29px;font-size:10.67px;letter-spacing:-0.600px;color:#000;font-family:'Liberation Serif',serif">23-<b>P5</b></span>
<span class="t lb" style="left:546.00px;top:134.29px;font-size:10.67px;letter-spacing:-0.600px;color:#000;font-family:'Liberation Serif',serif">24-<b>P8</b></span>
<span class="t lb" style="left:590.00px;top:134.29px;font-size:10.67px;letter-spacing:-0.600px;color:#000;font-family:'Liberation Serif',serif">25-<b>P4</b></span>
<span class="t lb" style="left:634.00px;top:134.29px;font-size:10.67px;letter-spacing:-0.600px;color:#000;font-family:'Liberation Serif',serif">26-<b>P8</b></span>
<span class="t lb" style="left:678.00px;top:134.29px;font-size:10.67px;letter-spacing:-0.600px;color:#000;font-family:'Liberation Serif',serif">27-<b>P5</b></span>
<span class="t lb" style="left:722.00px;top:134.29px;font-size:10.67px;letter-spacing:-0.600px;color:#000;font-family:'Liberation Serif',serif">28-<b>P3</b></span>
<span class="t lb" style="left:766.00px;top:134.29px;font-size:10.67px;letter-spacing:-0.600px;color:#000;font-family:'Liberation Serif',serif">29-<b>P5</b></span>
<span class="t lb" style="left:810.00px;top:134.29px;font-size:10.67px;letter-spacing:-0.600px;color:#000;font-family:'Liberation Serif',serif">30-<b>P2</b></span>
<span class="t lb" style="left:414.00px;top:171.29px;font-size:10.67px;letter-spacing:-0.600px;color:#000;font-family:'Liberation Serif',serif">31-<b>P5</b></span>
<span class="t lb" style="left:458.00px;top:171.29px;font-size:10.67px;letter-spacing:-0.600px;color:#000;font-family:'Liberation Serif',serif">32-<b>P3</b></span>
<span class="t lb" style="left:502.00px;top:171.29px;font-size:10.67px;letter-spacing:-0.600px;color:#000;font-family:'Liberation Serif',serif">33-<b>P5</b></span>
<span class="t lb" style="left:546.00px;top:171.29px;font-size:10.67px;letter-spacing:-0.600px;color:#000;font-family:'Liberation Serif',serif">34-<b>P8</b></span>
<span class="t lb" style="left:590.00px;top:171.29px;font-size:10.67px;letter-spacing:-0.600px;color:#000;font-family:'Liberation Serif',serif">35-<b>P4</b></span>
<span class="t lb" style="left:634.00px;top:171.29px;font-size:10.67px;letter-spacing:-0.600px;color:#000;font-family:'Liberation Serif',serif">36-<b>P8</b></span>
<span class="t lb" style="left:678.00px;top:171.29px;font-size:10.67px;letter-spacing:-0.600px;color:#000;font-family:'Liberation Serif',serif">37-<b>P5</b></span>
<span class="t lb" style="left:722.00px;top:171.29px;font-size:10.67px;letter-spacing:-0.600px;color:#000;font-family:'Liberation Serif',serif">38-<b>P3</b></span>
<span class="t lb" style="left:766.00px;top:171.29px;font-size:10.67px;letter-spacing:-0.600px;color:#000;font-family:'Liberation Serif',serif">39-<b>P5</b></span>
<span class="t lb" style="left:810.00px;top:171.29px;font-size:10.67px;letter-spacing:-0.600px;color:#000;font-family:'Liberation Serif',serif">40-<b>P2</b></span>
<span class="t lb" style="left:414.00px;top:208.29px;font-size:10.67px;letter-spacing:-0.600px;color:#000;font-family:'Liberation Serif',serif">41-<b>P5</b></span>
<span class="t lb" style="left:458.00px;top:208.29px;font-size:10.67px;letter-spacing:-0.600px;color:#000;font-family:'Liberation Serif',serif">42-<b>P3</b></span>
<span class="t lb" style="left:502.00px;top:208.29px;font-size:10.67px;letter-spacing:-0.600px;color:#000;font-family:'Liberation Serif',serif">43-<b>P5</b></span>
<span class="t lb" style="left:546.00px;top:208.29px;font-size:10.67px;letter-spacing:-0.600px;color:#000;font-family:'Liberation Serif',serif">44-<b>P8</b></span>
<span class="t lb" style="left:590.00px;top:208.29px;font-size:10.67px;letter-spacing:-0.600px;color:#000;font-family:'Liberation Serif',serif">45-<b>P11</b></span>
<span class="t lb" style="left:634.00px;top:208.29px;font-size:10.67px;letter-spacing:-0.600px;color:#000;font-family:'Liberation Serif',serif">46-<b>P8</b></span>
<span class="t lb" style="left:678.00px;top:208.29px;font-size:10.67px;letter-spacing:-0.600px;color:#000;font-family:'Liberation Serif',serif">47-<b>P5</b></span>
<span class="t lb" style="left:722.00px;top:208.29px;font-size:10.67px;letter-spacing:-0.600px;color:#000;font-family:'Liberation Serif',serif">48-<b>P3</b></span>
<span class="t lb" style="left:766.00px;top:208.29px;font-size:10.67px;letter-spacing:-0.600px;color:#000;font-family:'Liberation Serif',serif">49-<b>P5</b></span>
<span class="t lb" style="left:810.00px;top:208.29px;font-size:10.67px;letter-spacing:-0.600px;color:#000;font-family:'Liberation Serif',serif">50-<b>P2</b></span>
<span class="t lb" style="left:414.00px;top:245.29px;font-size:10.67px;letter-spacing:-0.600px;color:#000;font-family:'Liberation Serif',serif">51-<b>P10</b></span>
<span class="t lb" style="left:458.00px;top:245.29px;font-size:10.67px;letter-spacing:-0.600px;color:#000;font-family:'Liberation Serif',serif">52-<b>P3</b></span>
<span class="t lb" style="left:502.00px;top:245.29px;font-size:10.67px;letter-spacing:-0.600px;color:#000;font-family:'Liberation Serif',serif">53-<b>P5</b></span>
<span class="t lb" style="left:546.00px;top:245.29px;font-size:10.67px;letter-spacing:-0.600px;color:#000;font-family:'Liberation Serif',serif">54-<b>P8</b></span>
<span class="t lb" style="left:590.00px;top:245.29px;font-size:10.67px;letter-spacing:-0.600px;color:#000;font-family:'Liberation Serif',serif">55-<b>P4</b></span>
<span class="t lb" style="left:634.00px;top:245.29px;font-size:10.67px;letter-spacing:-0.600px;color:#000;font-family:'Liberation Serif',serif">56-<b>P8</b></span>
<span class="t lb" style="left:678.00px;top:245.29px;font-size:10.67px;letter-spacing:-0.600px;color:#000;font-family:'Liberation Serif',serif">57-<b>P5</b></span>
<span class="t lb" style="left:722.00px;top:245.29px;font-size:10.67px;letter-spacing:-0.600px;color:#000;font-family:'Liberation Serif',serif">58-<b>P3</b></span>
<span class="t lb" style="left:766.00px;top:245.29px;font-size:10.67px;letter-spacing:-0.600px;color:#000;font-family:'Liberation Serif',serif">59-<b>P5</b></span>
<span class="t lb" style="left:810.00px;top:245.29px;font-size:10.67px;letter-spacing:-0.600px;color:#000;font-family:'Liberation Serif',serif">60-<b>P2</b></span>
<span class="t lb" style="left:414.00px;top:282.29px;font-size:10.67px;letter-spacing:-0.600px;color:#000;font-family:'Liberation Serif',serif">61-<b>P5</b></span>
<span class="t lb" style="left:458.00px;top:282.29px;font-size:10.67px;letter-spacing:-0.600px;color:#000;font-family:'Liberation Serif',serif">62-<b>P3</b></span>
<span class="t lb" style="left:502.00px;top:282.29px;font-size:10.67px;letter-spacing:-0.600px;color:#000;font-family:'Liberation Serif',serif">63-<b>P5</b></span>
<span class="t lb" style="left:546.00px;top:282.29px;font-size:10.67px;letter-spacing:-0.600px;color:#000;font-family:'Liberation Serif',serif">64-<b>P10</b></span>
<span class="t lb" style="left:590.00px;top:282.29px;font-size:10.67px;letter-spacing:-0.600px;color:#000;font-family:'Liberation Serif',serif">65-<b>P3</b></span>
<span class="t lb" style="left:634.00px;top:282.29px;font-size:10.67px;letter-spacing:-0.600px;color:#000;font-family:'Liberation Serif',serif">66-<b>P8</b></span>
<span class="t lb" style="left:678.00px;top:282.29px;font-size:10.67px;letter-spacing:-0.600px;color:#000;font-family:'Liberation Serif',serif">67-<b>P5</b></span>
<span class="t lb" style="left:722.00px;top:282.29px;font-size:10.67px;letter-spacing:-0.600px;color:#000;font-family:'Liberation Serif',serif">68-<b>P3</b></span>
<span class="t lb" style="left:766.00px;top:282.29px;font-size:10.67px;letter-spacing:-0.600px;color:#000;font-family:'Liberation Serif',serif">69-<b>P5</b></span>
<span class="t lb" style="left:810.00px;top:282.29px;font-size:10.67px;letter-spacing:-0.600px;color:#000;font-family:'Liberation Serif',serif">70-<b>P2</b></span>
<span class="t lb" style="left:414.00px;top:319.29px;font-size:10.67px;letter-spacing:-0.600px;color:#000;font-family:'Liberation Serif',serif">71-<b>P5</b></span>
<span class="t lb" style="left:458.00px;top:319.29px;font-size:10.67px;letter-spacing:-0.600px;color:#000;font-family:'Liberation Serif',serif">72-<b>P3</b></span>
<span class="t lb" style="left:502.00px;top:319.29px;font-size:10.67px;letter-spacing:-0.600px;color:#000;font-family:'Liberation Serif',serif">73-<b>P5</b></span>
<span class="t lb" style="left:546.00px;top:319.29px;font-size:10.67px;letter-spacing:-0.600px;color:#000;font-family:'Liberation Serif',serif">74-<b>P8</b></span>
<span class="t lb" style="left:590.00px;top:319.29px;font-size:10.67px;letter-spacing:-0.600px;color:#000;font-family:'Liberation Serif',serif">75-<b>P4</b></span>
<span class="t lb" style="left:634.00px;top:319.29px;font-size:10.67px;letter-spacing:-0.600px;color:#000;font-family:'Liberation Serif',serif">76-<b>P8</b></span>
<span class="t lb" style="left:678.00px;top:319.29px;font-size:10.67px;letter-spacing:-0.600px;color:#000;font-family:'Liberation Serif',serif">77-<b>P5</b></span>
<span class="t lb" style="left:722.00px;top:319.29px;font-size:10.67px;letter-spacing:-0.600px;color:#000;font-family:'Liberation Serif',serif">78-<b>P3</b></span>
<span class="t lb" style="left:766.00px;top:319.29px;font-size:10.67px;letter-spacing:-0.600px;color:#000;font-family:'Liberation Serif',serif">79-<b>P5</b></span>
<span class="t lb" style="left:810.00px;top:319.29px;font-size:10.67px;letter-spacing:-0.600px;color:#000;font-family:'Liberation Serif',serif">80-<b>P2</b></span>
<span class="t lb" style="left:414.00px;top:356.29px;font-size:10.67px;letter-spacing:-0.600px;color:#000;font-family:'Liberation Serif',serif">81-<b>P5</b></span>
<span class="t lb" style="left:458.00px;top:356.29px;font-size:10.67px;letter-spacing:-0.600px;color:#000;font-family:'Liberation Serif',serif">82-<b>P3</b></span>
<span class="t lb" style="left:502.00px;top:356.29px;font-size:10.67px;letter-spacing:-0.600px;color:#000;font-family:'Liberation Serif',serif">83-<b>P5</b></span>
<span class="t lb" style="left:546.00px;top:356.29px;font-size:10.67px;letter-spacing:-0.600px;color:#000;font-family:'Liberation Serif',serif">84-<b>P8</b></span>
<span class="t lb" style="left:590.00px;top:356.29px;font-size:10.67px;letter-spacing:-0.600px;color:#000;font-family:'Liberation Serif',serif">85-<b>P4</b></span>
<span class="t lb" style="left:634.00px;top:356.29px;font-size:10.67px;letter-spacing:-0.600px;color:#000;font-family:'Liberation Serif',serif">86-<b>P8</b></span>
<span class="t lb" style="left:678.00px;top:356.29px;font-size:10.67px;letter-spacing:-0.600px;color:#000;font-family:'Liberation Serif',serif">87-<b>P5</b></span>
<span class="t lb" style="left:722.00px;top:356.29px;font-size:10.67px;letter-spacing:-0.600px;color:#000;font-family:'Liberation Serif',serif">88-<b>P3</b></span>
<span class="t lb" style="left:766.00px;top:356.29px;font-size:10.67px;letter-spacing:-0.600px;color:#000;font-family:'Liberation Serif',serif">89-<b>P5</b></span>
<span class="t lb" style="left:810.00px;top:356.29px;font-size:10.67px;letter-spacing:-0.600px;color:#000;font-family:'Liberation Serif',serif">90-<b>P2</b></span>
<span class="t lb" style="left:414.00px;top:393.29px;font-size:10.67px;letter-spacing:-0.600px;color:#000;font-family:'Liberation Serif',serif">91-<b>P5</b></span>
<span class="t lb" style="left:458.00px;top:393.29px;font-size:10.67px;letter-spacing:-0.600px;color:#000;font-family:'Liberation Serif',serif">92-<b>P3</b></span>
<span class="t lb" style="left:502.00px;top:393.29px;font-size:10.67px;letter-spacing:-0.600px;color:#000;font-family:'Liberation Serif',serif">93-<b>P5</b></span>
<span class="t lb" style="left:546.00px;top:393.29px;font-size:10.67px;letter-spacing:-0.600px;color:#000;font-family:'Liberation Serif',serif">94-<b>P8</b></span>
<span class="t lb" style="left:590.00px;top:393.29px;font-size:10.67px;letter-spacing:-0.600px;color:#000;font-family:'Liberation Serif',serif">95-<b>P3</b></span>
<span class="t lb" style="left:634.00px;top:393.29px;font-size:10.67px;letter-spacing:-0.600px;color:#000;font-family:'Liberation Serif',serif">96-<b>P8</b></span>
<span class="t lb" style="left:678.00px;top:393.29px;font-size:10.67px;letter-spacing:-0.600px;color:#000;font-family:'Liberation Serif',serif">97-<b>P4</b></span>
<span class="t lb" style="left:722.00px;top:393.29px;font-size:10.67px;letter-spacing:-0.600px;color:#000;font-family:'Liberation Serif',serif">98-<b>P3</b></span>
<span class="t lb" style="left:766.00px;top:393.29px;font-size:10.67px;letter-spacing:-0.600px;color:#000;font-family:'Liberation Serif',serif">99-<b>P3</b></span>
<span class="t lb" style="left:810.00px;top:393.29px;font-size:10.67px;letter-spacing:-0.600px;color:#000;font-family:'Liberation Serif',serif">100-<b>P2</b></span>
<span class="t lb" style="left:414.00px;top:430.29px;font-size:10.67px;letter-spacing:-0.600px;color:#000;font-family:'Liberation Serif',serif">101-<b>P5</b></span>
<span class="t lb" style="left:458.00px;top:430.29px;font-size:10.67px;letter-spacing:-0.600px;color:#000;font-family:'Liberation Serif',serif">102-<b>P3</b></span>
<span class="t lb" style="left:502.00px;top:430.29px;font-size:10.67px;letter-spacing:-0.600px;color:#000;font-family:'Liberation Serif',serif">103-<b>P6</b></span>
<span class="t lb" style="left:546.00px;top:430.29px;font-size:10.67px;letter-spacing:-0.600px;color:#000;font-family:'Liberation Serif',serif">104-<b>P8</b></span>
<span class="t lb" style="left:590.00px;top:430.29px;font-size:10.67px;letter-spacing:-0.600px;color:#000;font-family:'Liberation Serif',serif">105-<b>P4</b></span>
<span class="t lb" style="left:634.00px;top:430.29px;font-size:10.67px;letter-spacing:-0.600px;color:#000;font-family:'Liberation Serif',serif">106-<b>P8</b></span>
<span class="t lb" style="left:678.00px;top:430.29px;font-size:10.67px;letter-spacing:-0.600px;color:#000;font-family:'Liberation Serif',serif">107-<b>P5</b></span>
<span class="t lb" style="left:722.00px;top:430.29px;font-size:10.67px;letter-spacing:-0.600px;color:#000;font-family:'Liberation Serif',serif">108-<b>P3</b></span>
<span class="t lb" style="left:766.00px;top:430.29px;font-size:10.67px;letter-spacing:-0.600px;color:#000;font-family:'Liberation Serif',serif">109-<b>P5</b></span>
<span class="t lb" style="left:810.00px;top:430.29px;font-size:10.67px;letter-spacing:-0.600px;color:#000;font-family:'Liberation Serif',serif">110-<b>P2</b></span>
<span class="t lb" style="left:414.00px;top:467.29px;font-size:10.67px;letter-spacing:-0.600px;color:#000;font-family:'Liberation Serif',serif">111-<b>P5</b></span>
<span class="t lb" style="left:458.00px;top:467.29px;font-size:10.67px;letter-spacing:-0.600px;color:#000;font-family:'Liberation Serif',serif">112-<b>P3</b></span>
<span class="t lb" style="left:502.00px;top:467.29px;font-size:10.67px;letter-spacing:-0.600px;color:#000;font-family:'Liberation Serif',serif">113-<b>P5</b></span>
<span class="t lb" style="left:546.00px;top:467.29px;font-size:10.67px;letter-spacing:-0.600px;color:#000;font-family:'Liberation Serif',serif">114-<b>P8</b></span>
<span class="t lb" style="left:590.00px;top:467.29px;font-size:10.67px;letter-spacing:-0.600px;color:#000;font-family:'Liberation Serif',serif">115-<b>P6</b></span>
<span class="t lb" style="left:634.00px;top:467.29px;font-size:10.67px;letter-spacing:-0.600px;color:#000;font-family:'Liberation Serif',serif">116-<b>P4</b></span>
<span class="t lb" style="left:678.00px;top:467.29px;font-size:10.67px;letter-spacing:-0.600px;color:#000;font-family:'Liberation Serif',serif">117-<b>P6</b></span>
<span class="t lb" style="left:722.00px;top:467.29px;font-size:10.67px;letter-spacing:-0.600px;color:#000;font-family:'Liberation Serif',serif">118-<b>P4</b></span>
<span class="t lb" style="left:766.00px;top:467.29px;font-size:10.67px;letter-spacing:-0.600px;color:#000;font-family:'Liberation Serif',serif">119-<b>P3</b></span>
<span class="t lb" style="left:810.00px;top:467.29px;font-size:10.67px;letter-spacing:-0.600px;color:#000;font-family:'Liberation Serif',serif">120-<b>P2</b></span>
<span class="t " style="left:893.50px;top:440.39px;font-size:11.5px;letter-spacing:-0.348px;color:#000;font-family:'Liberation Sans',sans-serif">Load</span>
<span class="t " style="left:893.00px;top:467.39px;font-size:11.5px;letter-spacing:-0.405px;color:#000;font-family:'Liberation Sans',sans-serif">Save</span>
<span class="t " style="left:1177.80px;top:620.19px;font-size:11.5px;letter-spacing:-0.713px;color:#000;font-family:'Liberation Sans',sans-serif">OK</span>
<span class="t " style="left:1250.10px;top:620.19px;font-size:11.5px;letter-spacing:-0.502px;color:#000;font-family:'Liberation Sans',sans-serif">Cancel</span>
<div class="abs" style="left:4px;top:607px;width:294px;height:1px;background:#e3e3e3"></div>
<div class="abs" style="left:3px;top:608px;width:297px;height:1px;background:#fff"></div>
</div>
</body></html>
